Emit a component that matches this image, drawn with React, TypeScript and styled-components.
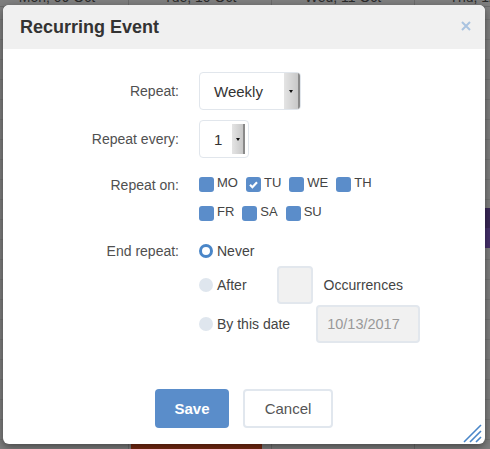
import React from "react";
import styled, { createGlobalStyle } from "styled-components";

const Global = createGlobalStyle`
  html, body { margin: 0; padding: 0; }
  body {
    width: 490px;
    height: 449px;
    overflow: hidden;
    font-family: "Liberation Sans", Arial, sans-serif;
  }
`;

const days = ["Mon, 09 Oct", "Tue, 10 Oct", "Wed, 11 Oct", "Thu, 12 Oct"];
const weekdays = [
  [
    { id: "MO", on: false },
    { id: "TU", on: true },
    { id: "WE", on: false },
    { id: "TH", on: false },
  ],
  [
    { id: "FR", on: false },
    { id: "SA", on: false },
    { id: "SU", on: false },
  ],
];

export default function App() {
  return (
    <>
      <Global />
      <Backdrop>
        <Calendar>
          {days.map((d) => (
            <DayColumn key={d}>
              <DayHead>{d}</DayHead>
            </DayColumn>
          ))}
        </Calendar>
        <EventBlock $left={131} $top={444} $w={131} $h={10} $color="#7a2a12" />
        <EventBlock $left={485} $top={208} $w={10} $h={20} $color="#3a2858" />
        <EventBlock $left={485} $top={228} $w={10} $h={20} $color="#46306c" />

        <Modal>
          <Header>
            <Title>Recurring Event</Title>
            <Close aria-label="close">
              <svg width="10" height="10" viewBox="0 0 10 10">
                <path d="M1 1L9 9M9 1L1 9" stroke="#a9c3e0" strokeWidth="2" />
              </svg>
            </Close>
          </Header>

          <Body>
            <Row $mt={23}>
              <Label>Repeat:</Label>
              <Select $w={102}>
                <SelectText>Weekly</SelectText>
                <Arrow $w={14} $inset={0} />
              </Select>
            </Row>

            <Row $mt={10}>
              <Label>Repeat every:</Label>
              <Select $w={50}>
                <SelectText>1</SelectText>
                <Arrow $w={11} $inset={3} />
              </Select>
            </Row>

            <Row $mt={19} $top>
              <Label $lh={16}>Repeat on:</Label>
              <Days>
                {weekdays.map((line, i) => (
                  <DayLine key={i}>
                    {line.map((d) => (
                      <DayCheck key={d.id}>
                        <Box>
                          {d.on && (
                            <svg width="11" height="11" viewBox="0 0 11 11">
                              <path
                                d="M2 5.8L4.4 8.2L9 3.2"
                                stroke="#fff"
                                strokeWidth="2.2"
                                fill="none"
                              />
                            </svg>
                          )}
                        </Box>
                        <DayText>{d.id}</DayText>
                      </DayCheck>
                    ))}
                  </DayLine>
                ))}
              </Days>
            </Row>

            <Row $mt={20} $top>
              <Label $lh={20}>End repeat:</Label>
              <Options>
                <Option $h={20}>
                  <Radio $on />
                  <OptText>Never</OptText>
                </Option>
                <Option $h={38} $mt={5}>
                  <Radio />
                  <OptText>After</OptText>
                  <Field $w={36} $ml={30} />
                  <OptText $ml={11}>Occurrences</OptText>
                </Option>
                <Option $h={38} $mt={1}>
                  <Radio />
                  <OptText>By this date</OptText>
                  <Field $w={104} $ml={26}>10/13/2017</Field>
                </Option>
              </Options>
            </Row>

            <Footer>
              <Button $primary $w={74}>Save</Button>
              <Button $w={90}>Cancel</Button>
            </Footer>
          </Body>

          <Grip width="20" height="19" viewBox="0 0 20 19">
            <path
              d="M1 18L18 1M7 18L18 7M13 18L18 13"
              stroke="#4a86c8"
              strokeWidth="1.6"
            />
          </Grip>
        </Modal>
      </Backdrop>
    </>
  );
}

const Backdrop = styled.div`
  position: relative;
  width: 490px;
  height: 449px;
  overflow: hidden;
  background-color: #7f7f7f;
  background-image: repeating-linear-gradient(
    to bottom,
    transparent 0,
    transparent 19px,
    #747474 19px,
    #747474 20px
  );
`;

const Calendar = styled.div`
  position: absolute;
  top: -11px;
  left: -14px;
  bottom: 0;
  display: grid;
  grid-template-columns: repeat(4, 143px);
`;

const DayColumn = styled.div`
  border-right: 1px solid #6c6c6c;
  height: 100%;
`;

const DayHead = styled.div`
  text-align: center;
  font-size: 14px;
  line-height: 16px;
  color: #2b2b2b;
  padding-bottom: 1px;
  border-bottom: 1px solid #6c6c6c;
`;

const EventBlock = styled.div<{
  $left: number;
  $top: number;
  $w: number;
  $h: number;
  $color: string;
}>`
  position: absolute;
  left: ${(p) => p.$left}px;
  top: ${(p) => p.$top}px;
  width: ${(p) => p.$w}px;
  height: ${(p) => p.$h}px;
  background: ${(p) => p.$color};
`;

const Modal = styled.div`
  position: absolute;
  left: 3px;
  top: 5px;
  width: 482px;
  height: 439px;
  background: #fff;
  border-radius: 6px;
  box-shadow: 0 3px 9px rgba(0, 0, 0, 0.45);
  overflow: hidden;
`;

const Header = styled.div`
  height: 44px;
  background: #f0f0f0;
  display: flex;
  align-items: center;
  justify-content: space-between;
  padding: 0 14px 0 17px;
`;

const Title = styled.h4`
  margin: 0;
  font-size: 18px;
  font-weight: bold;
  color: #333;
  padding-top: 1px;
`;

const Close = styled.span`
  display: flex;
  margin-top: -2px;
`;

const Body = styled.div`
  display: flex;
  flex-direction: column;
`;

const Row = styled.div<{ $mt: number; $top?: boolean }>`
  display: grid;
  grid-template-columns: 176px 1fr;
  column-gap: 20px;
  align-items: ${(p) => (p.$top ? "start" : "center")};
  margin-top: ${(p) => p.$mt}px;
`;

const Label = styled.label<{ $lh?: number }>`
  text-align: right;
  font-size: 14px;
  color: #505050;
  line-height: ${(p) => (p.$lh ? `${p.$lh}px` : "normal")};
`;

const Select = styled.div<{ $w: number }>`
  width: ${(p) => p.$w}px;
  height: 38px;
  box-sizing: border-box;
  border: 1px solid #e1e6ec;
  border-radius: 4px;
  display: flex;
  align-items: center;
  justify-content: space-between;
  padding-left: 14px;
  overflow: hidden;
`;

const SelectText = styled.span`
  font-size: 15px;
  color: #333;
`;

const Arrow = styled.span<{ $w: number; $inset: number }>`
  align-self: stretch;
  width: ${(p) => p.$w}px;
  margin: ${(p) => `${p.$inset}px ${p.$inset}px ${p.$inset}px 0`};
  background: linear-gradient(to right, #e4e4e4, #c8c8c8);
  border-right: 2px solid #8a8a8a;
  display: flex;
  align-items: center;
  justify-content: center;
  &::after {
    content: "";
    border-left: 2.5px solid transparent;
    border-right: 2.5px solid transparent;
    border-top: 3px solid #111;
  }
`;

const Days = styled.div`
  display: flex;
  flex-direction: column;
  gap: 14px;
`;

const DayLine = styled.div`
  display: flex;
`;

const DayCheck = styled.div`
  display: flex;
  align-items: flex-start;
  gap: 3px;
  margin-right: 8px;
`;

const Box = styled.span`
  width: 15px;
  height: 15px;
  border-radius: 3px;
  background: #5b8dca;
  display: flex;
  align-items: center;
  justify-content: center;
`;

const DayText = styled.span`
  font-size: 13px;
  line-height: 13px;
  margin-top: -1px;
  color: #444;
`;

const Options = styled.div`
  display: flex;
  flex-direction: column;
`;

const Option = styled.div<{ $h: number; $mt?: number }>`
  display: flex;
  align-items: center;
  height: ${(p) => p.$h}px;
  margin-top: ${(p) => p.$mt ?? 0}px;
`;

const Radio = styled.span<{ $on?: boolean }>`
  width: 14px;
  height: 14px;
  box-sizing: border-box;
  border-radius: 50%;
  margin-right: 4px;
  background: ${(p) => (p.$on ? "#fff" : "#dfe6ee")};
  border: ${(p) => (p.$on ? "3px solid #4a86c8" : "none")};
`;

const OptText = styled.span<{ $ml?: number }>`
  font-size: 14px;
  color: #444;
  margin-left: ${(p) => p.$ml ?? 0}px;
`;

const Field = styled.div<{ $w: number; $ml: number }>`
  width: ${(p) => p.$w}px;
  height: 38px;
  box-sizing: border-box;
  margin-left: ${(p) => p.$ml}px;
  background: #f1f1f1;
  border: 2px solid #e2e7ed;
  border-radius: 4px;
  display: flex;
  align-items: center;
  padding-left: 9px;
  font-size: 14.5px;
  color: #999;
`;

const Footer = styled.div`
  display: flex;
  justify-content: center;
  gap: 14px;
  margin-top: 46px;
`;

const Button = styled.button<{ $primary?: boolean; $w: number }>`
  width: ${(p) => p.$w}px;
  height: 39px;
  box-sizing: border-box;
  padding: 0;
  border-radius: 4px;
  font-family: "Liberation Sans", Arial, sans-serif;
  font-size: 15px;
  font-weight: ${(p) => (p.$primary ? "bold" : "normal")};
  color: ${(p) => (p.$primary ? "#fff" : "#555")};
  background: ${(p) => (p.$primary ? "#5a8dca" : "#fff")};
  border: ${(p) => (p.$primary ? "none" : "2px solid #e1e7ee")};
`;

const Grip = styled.svg`
  position: absolute;
  right: 2px;
  bottom: 1px;
`;
